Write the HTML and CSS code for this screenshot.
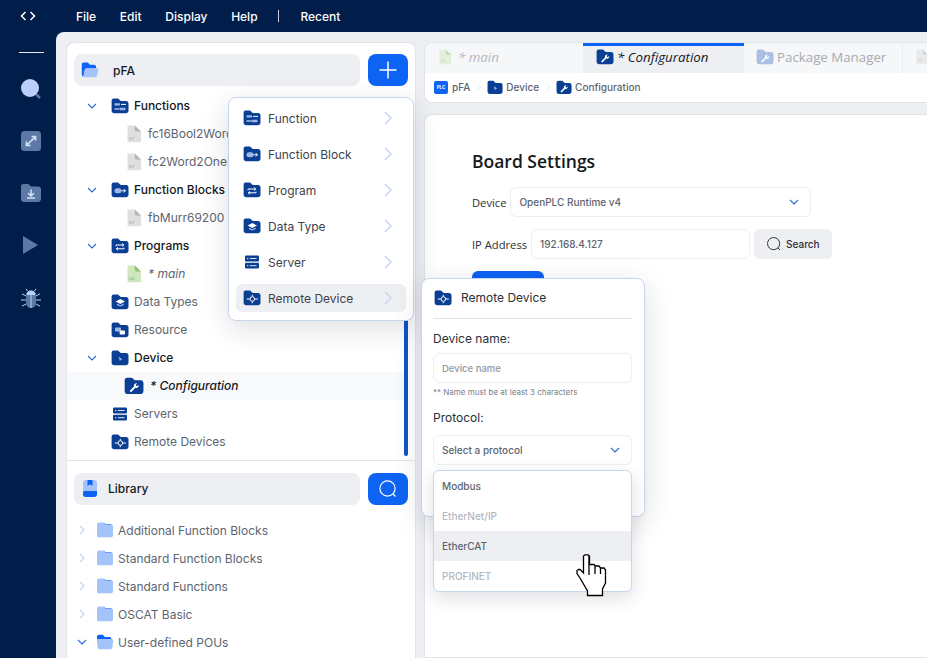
FILE: index.html
```html
<!DOCTYPE html>
<html lang="en">
<head>
<meta charset="utf-8">
<title>OpenPLC Editor</title>
<link rel="stylesheet" href="styles.css">
</head>
<body>
<svg class="defs" width="0" height="0" aria-hidden="true">
  <defs>
    <path id="fold" d="M.6 2.800C.6 1.400 1.500.5 2.900.5H7L9.800 2.900H15C16.600 2.900 17.500 3.900 17.500 5.500V12.500C17.500 14.200 16.400 15.300 14.800 15.300H3.300C1.700 15.300.6 14.200.6 12.500Z"/>
    <symbol id="i-fn" viewBox="0 0 18 16"><use href="#fold" fill="#0b3f94"/><g fill="#9db8e6"><rect x="3.500" y="5.200" width="5.500" height="2.400" rx=".6"/><rect x="8.500" y="9.800" width="6" height="2.400" rx=".6"/></g><path d="M10 6.400h5M3.500 11H8" stroke="#fff" stroke-width="1"/></symbol>
    <symbol id="i-fb" viewBox="0 0 18 16"><use href="#fold" fill="#0b3f94"/><rect x="3.500" y="6.300" width="7" height="5" rx="2.500" fill="#9db8e6"/><path d="M10.500 8.800h4M12.800 7.100l1.700 1.700-1.700 1.700" stroke="#fff" stroke-width="1" fill="none"/></symbol>
    <symbol id="i-prog" viewBox="0 0 18 16"><use href="#fold" fill="#0b3f94"/><path d="M5 8.200V7h7.500M11 5.600 12.800 7 11 8.400M13 9.600v1.200H5.500M7 9.400 5.200 10.800 7 12.200" stroke="#fff" stroke-width="1" fill="none"/></symbol>
    <symbol id="i-dt" viewBox="0 0 18 16"><use href="#fold" fill="#0b3f94"/><path d="M9.300 5 14 7.500 9.300 10 4.600 7.500Z" fill="#fff"/><path d="M6 9.600 9.300 11.400 12.600 9.600V11L9.300 12.500 6 11Z" fill="#b9cdf0"/></symbol>
    <symbol id="i-res" viewBox="0 0 18 16"><use href="#fold" fill="#0b3f94"/><rect x="4" y="5.600" width="6" height="4" rx=".8" fill="#9db8e6"/><rect x="8.600" y="8.600" width="5.400" height="4" rx=".8" fill="#fff"/></symbol>
    <symbol id="i-dev" viewBox="0 0 18 16"><use href="#fold" fill="#0b3f94"/><path d="M7.600 6.400 11.600 9.400 9.600 9.700 9 11.600Z" fill="#9db8e6"/></symbol>
    <symbol id="i-conf" viewBox="0 0 18 16"><use href="#fold" fill="#0b3f94"/><path d="M5 12.400 9 8.400C8.500 6.800 9.700 5.200 11.800 5.500L10.500 7.100 11.600 8.300 13.200 7C13.500 9 11.800 10.200 10.200 9.600L6.300 13.600Z" fill="#fff"/></symbol>
    <symbol id="i-conf-l" viewBox="0 0 18 16"><use href="#fold" fill="#a9bfe3"/><path d="M5 12.400 9 8.400C8.500 6.800 9.700 5.200 11.800 5.500L10.500 7.100 11.600 8.300 13.200 7C13.500 9 11.800 10.200 10.200 9.600L6.300 13.600Z" fill="#fff"/></symbol>
    <symbol id="i-srv" viewBox="0 0 18 16"><rect x="2" y="1.600" width="14" height="5.800" rx="1" fill="#0b3f94"/><rect x="2" y="8.800" width="14" height="5.800" rx="1" fill="#0b3f94"/><path d="M4 4.500h1.400M7 4.500h6.500M4 11.700h1.400M7 11.700h6.500" stroke="#dbe6f8" stroke-width="1"/></symbol>
    <symbol id="i-rem" viewBox="0 0 18 16"><use href="#fold" fill="#0b3f94"/><circle cx="9.300" cy="9" r="2.300" fill="none" stroke="#fff" stroke-width="1"/><path d="M9.300 4.800v1.600M9.300 11.600v1.600M3.800 9h3M11.800 9h3" stroke="#fff" stroke-width="1"/></symbol>
    <symbol id="i-file-g" viewBox="0 0 16 18"><path d="M1.500 1.500C1.500.9 1.900.5 2.500.5H8.800L15 6.500V16C15 16.800 14.500 17.300 13.800 17.300H2.700C2 17.300 1.500 16.800 1.500 16Z" fill="#dedfe1"/><path d="M8.800.5 15 6.500H10.500C9.500 6.500 8.800 5.800 8.800 4.800Z" fill="#b2b4b8"/><text x="3" y="14.500" class="file-tag file-tag-g">ST</text></symbol>
    <symbol id="i-file-l" viewBox="0 0 16 18"><path d="M1.500 1.500C1.500.9 1.900.5 2.500.5H8.800L15 6.500V16C15 16.800 14.500 17.300 13.800 17.300H2.700C2 17.300 1.500 16.800 1.500 16Z" fill="#cfe6bf"/><path d="M8.800.5 15 6.500H10.500C9.500 6.500 8.800 5.800 8.800 4.800Z" fill="#8fc46f"/><text x="3" y="14.500" class="file-tag file-tag-l">LD</text></symbol>
    <symbol id="i-folder-c" viewBox="0 0 18 16"><path d="M1 2.500C1 1.400 1.800.6 2.900.6H8L9.600 2.200H14.800C16.200 2.200 17 3 17 4.300V13.200C17 14.500 16.200 15.300 14.800 15.300H3.200C1.800 15.300 1 14.500 1 13.200Z" fill="#a5c3fb"/><path d="M8 .6 9.600 2.200H14.800C15.300 2.200 15.800 2.400 16.100 2.700H9.300Z" fill="#0d63f3"/></symbol>
    <symbol id="i-folder-o" viewBox="0 0 18 16"><path d="M1 2.700C1 1.500 1.800.7 3 .7H6.800L8.800 2.900H13.500C14.600 2.900 15.300 3.600 15.300 4.700V6H1Z" fill="#0d63f3"/><path d="M.8 6.100C.8 5.400 1.300 5 2 5H16C16.800 5 17.300 5.600 17.200 6.400L16.400 13.300C16.300 14.500 15.500 15.300 14.300 15.300H3.700C2.500 15.300 1.700 14.500 1.600 13.300Z" fill="#a5c3fb"/></symbol>
    <symbol id="i-project" viewBox="0 0 18 16"><path d="M.8 2.600C.8 1.300 1.600.5 2.900.5H6.800L9 2.700H13C14.300 2.700 15 3.500 15 4.700V6.500H6C4.800 6.500 4 7.200 3.700 8.300L2.400 14.800C1.400 14.500.8 13.700.8 12.600Z" fill="#0d63f3"/><path d="M5.800 6.300H16C17 6.300 17.500 7 17.300 7.900L16 13.400C15.700 14.600 14.900 15.300 13.700 15.300H3.200C2.500 15.300 2.200 14.900 2.300 14.300L3.700 8C4 6.900 4.700 6.300 5.800 6.300Z" fill="#a5c3fb"/></symbol>
    <symbol id="chev" viewBox="0 0 12 12"><path d="M2 4 6 8 10 4" fill="none" stroke="currentColor" stroke-width="1.100"/></symbol>
    <symbol id="chev-r" viewBox="0 0 12 12"><path d="M4 2 8 6 4 10" fill="none" stroke="currentColor" stroke-width="1.100"/></symbol>
    <symbol id="search" viewBox="0 0 20 20"><circle cx="9.500" cy="9.500" r="7.600" fill="none" stroke="currentColor" stroke-width="1.200"/><path d="M15 15 17.500 17.500" stroke="currentColor" stroke-width="1.200"/></symbol>
  </defs>
</svg>

<header class="topbar">
  <svg class="code-icon" viewBox="0 0 16 10" aria-hidden="true"><path d="M5.500 1 1.500 5 5.500 9M10.500 1 14.500 5 10.500 9" fill="none" stroke="#fff" stroke-width="1.500"/></svg>
  <nav class="menubar">
    <span>File</span><span>Edit</span><span>Display</span><span>Help</span><i class="menu-sep"></i><span>Recent</span>
  </nav>
</header>

<div class="shell">
  <aside class="rail">
    <hr class="rail-line">
    <svg class="rail-icon r-search" viewBox="0 0 22 22" aria-hidden="true"><circle cx="10" cy="10" r="9" fill="#b9d0fa"/><path d="M16.500 16.500 20 20" stroke="#5d7aa6" stroke-width="2.500"/></svg>
    <svg class="rail-icon r-expand" viewBox="0 0 20 20" aria-hidden="true"><rect width="20" height="20" rx="3.500" fill="#5c78a5"/><path d="M6.500 13.500 13.500 6.500M10.500 5.500H14.500V9.500M5.500 10.500V14.500H9.500" fill="none" stroke="#d5e2fa" stroke-width="1.700"/></svg>
    <svg class="rail-icon r-down" viewBox="0 0 20 18" aria-hidden="true"><path d="M0 2.500C0 1 1 0 2.500 0H7.500L10 2.500H17C18.800 2.500 20 3.500 20 5.200V14.800C20 16.700 18.800 18 17 18H3C1.200 18 0 16.700 0 14.800Z" fill="#5c78a5"/><path d="M10 5.500V11.500M7 9.300 10 12 13 9.300M6 14H14" fill="none" stroke="#d5e2fa" stroke-width="1.500"/></svg>
    <svg class="rail-icon r-play" viewBox="0 0 15 18" aria-hidden="true"><path d="M0 0 15 9 0 18Z" fill="#5c78a5"/></svg>
    <svg class="rail-icon r-bug" viewBox="0 0 20 20" aria-hidden="true"><path d="M5 7C5 4 7 2.500 10 2.500S15 4 15 7V15C15 18 12.500 20 10 20S5 18 5 15Z" fill="#5c78a5"/><path d="M5.500 5.500C6.500 3.500 8 2.500 10 2.500S13.500 3.500 14.500 5.500L14 7H6Z" fill="#b9d0fa"/><path d="M10 7V20M6.500 3 5 .8M13.500 3 15 .8M5 8 1 5.800M15 8 19 5.800M5 12H0M15 12H20M5 16 1 18.200M15 16 19 18.200" stroke="#b9d0fa" stroke-width="1"/></svg>
  </aside>

  <main class="workspace">
    <section class="sidepanel">
      <div class="tool-row">
        <div class="tool-title title-pfa">
          <svg class="ic-18" aria-hidden="true"><use href="#i-project"/></svg>
          <span>pFA</span>
        </div>
        <button class="tool-btn" type="button" aria-label="Add">
          <svg viewBox="0 0 20 20" aria-hidden="true"><path d="M10 1.500V18.500M1.500 10H18.500" stroke="#fff" stroke-width="1.500"/></svg>
        </button>
      </div>

      <ul class="tree">
        <li class="row lv0 strong"><svg class="tw" aria-hidden="true"><use href="#chev"/></svg><svg class="ic-18" aria-hidden="true"><use href="#i-fn"/></svg><span>Functions</span></li>
        <li class="row lv1"><svg class="ic-file" aria-hidden="true"><use href="#i-file-g"/></svg><span>fc16Bool2Word</span></li>
        <li class="row lv1"><svg class="ic-file" aria-hidden="true"><use href="#i-file-g"/></svg><span>fc2Word2OneBool</span></li>
        <li class="row lv0 strong"><svg class="tw" aria-hidden="true"><use href="#chev"/></svg><svg class="ic-18" aria-hidden="true"><use href="#i-fb"/></svg><span>Function Blocks</span></li>
        <li class="row lv1"><svg class="ic-file" aria-hidden="true"><use href="#i-file-g"/></svg><span>fbMurr69200</span></li>
        <li class="row lv0 strong"><svg class="tw" aria-hidden="true"><use href="#chev"/></svg><svg class="ic-18" aria-hidden="true"><use href="#i-prog"/></svg><span>Programs</span></li>
        <li class="row lv1 ital"><svg class="ic-file" aria-hidden="true"><use href="#i-file-l"/></svg><span>* main</span></li>
        <li class="row lv0x"><svg class="ic-18" aria-hidden="true"><use href="#i-dt"/></svg><span>Data Types</span></li>
        <li class="row lv0x"><svg class="ic-18" aria-hidden="true"><use href="#i-res"/></svg><span>Resource</span></li>
        <li class="row lv0 strong"><svg class="tw" aria-hidden="true"><use href="#chev"/></svg><svg class="ic-18" aria-hidden="true"><use href="#i-dev"/></svg><span>Device</span></li>
        <li class="row lv-conf"><svg class="ic-conf" aria-hidden="true"><use href="#i-conf"/></svg><span>* Configuration</span></li>
        <li class="row lv0x"><svg class="ic-18" aria-hidden="true"><use href="#i-srv"/></svg><span>Servers</span></li>
        <li class="row lv0x"><svg class="ic-18" aria-hidden="true"><use href="#i-rem"/></svg><span>Remote Devices</span></li>
      </ul>
      <i class="scrollbar"></i>

      <div class="library">
        <div class="tool-row lib-tools">
          <div class="tool-title title-lib">
            <svg class="ic-lib" viewBox="0 0 14 17" aria-hidden="true"><path d="M0 2.500C0 1.100 1.100 0 2.500 0H11.500C12.900 0 14 1.100 14 2.500V12H0Z" fill="#a5c3fb"/><path d="M0 13C0 11.500 1 11 2.500 11H14V14.500C14 15.900 12.900 17 11.500 17H2.500C1.100 17 0 15.900 0 14.500Z" fill="#0d63f3"/><path d="M4.500 0H9.500V6L7 4.300 4.500 6Z" fill="#0d63f3"/></svg>
            <span>Library</span>
          </div>
          <button class="tool-btn" type="button" aria-label="Search">
            <svg viewBox="0 0 20 20" aria-hidden="true"><use href="#search" color="#fff"/></svg>
          </button>
        </div>
        <ul class="lib-tree">
          <li class="lib-row"><svg class="tw tw-r" aria-hidden="true"><use href="#chev-r"/></svg><svg class="ic-lf" aria-hidden="true"><use href="#i-folder-c"/></svg><span>Additional Function Blocks</span></li>
          <li class="lib-row"><svg class="tw tw-r" aria-hidden="true"><use href="#chev-r"/></svg><svg class="ic-lf" aria-hidden="true"><use href="#i-folder-c"/></svg><span>Standard Function Blocks</span></li>
          <li class="lib-row"><svg class="tw tw-r" aria-hidden="true"><use href="#chev-r"/></svg><svg class="ic-lf" aria-hidden="true"><use href="#i-folder-c"/></svg><span>Standard Functions</span></li>
          <li class="lib-row"><svg class="tw tw-r" aria-hidden="true"><use href="#chev-r"/></svg><svg class="ic-lf" aria-hidden="true"><use href="#i-folder-c"/></svg><span>OSCAT Basic</span></li>
          <li class="lib-row"><svg class="tw" aria-hidden="true"><use href="#chev"/></svg><svg class="ic-lf" aria-hidden="true"><use href="#i-folder-o"/></svg><span>User-defined POUs</span></li>
        </ul>
      </div>
    </section>

    <section class="content">
      <div class="tabs-card">
        <div class="tabs">
          <div class="tab tab-dim"><svg class="ic-tabfile" aria-hidden="true"><use href="#i-file-l"/></svg><span>* main</span></div>
          <div class="tab tab-active"><svg class="ic-tab" aria-hidden="true"><use href="#i-conf"/></svg><span>* Configuration</span></div>
          <div class="tab tab-pkg"><svg class="ic-tab" aria-hidden="true"><use href="#i-conf-l"/></svg><span>Package Manager</span></div>
          <div class="tab tab-last"><svg class="ic-tabfile" aria-hidden="true"><use href="#i-file-g"/></svg></div>
        </div>
        <div class="crumbs">
          <span class="plc">PLC</span><span>pFA</span>
          <svg class="crumb-sep" aria-hidden="true"><use href="#chev-r"/></svg>
          <svg class="ic-crumb" aria-hidden="true"><use href="#i-dev"/></svg><span>Device</span>
          <svg class="crumb-sep" aria-hidden="true"><use href="#chev-r"/></svg>
          <svg class="ic-crumb" aria-hidden="true"><use href="#i-conf"/></svg><span>Configuration</span>
        </div>
      </div>

      <div class="board">
        <h1>Board Settings</h1>
        <div class="form-row">
          <label>Device</label>
          <div class="field field-device"><span>OpenPLC Runtime v4</span><svg class="fchev" aria-hidden="true"><use href="#chev"/></svg></div>
        </div>
        <div class="form-row">
          <label>IP Address</label>
          <div class="field field-ip"><span>192.168.4.127</span></div>
          <button class="search-btn" type="button"><svg aria-hidden="true"><use href="#search"/></svg>Search</button>
        </div>
        <button class="primary" type="button" aria-label="Connect"></button>
      </div>
    </section>
  </main>
</div>

<div class="popmenu">
  <div class="pm-item"><svg class="ic-18" aria-hidden="true"><use href="#i-fn"/></svg><span>Function</span><svg class="pm-chev" aria-hidden="true"><use href="#chev-r"/></svg></div>
  <div class="pm-item"><svg class="ic-18" aria-hidden="true"><use href="#i-fb"/></svg><span>Function Block</span><svg class="pm-chev" aria-hidden="true"><use href="#chev-r"/></svg></div>
  <div class="pm-item"><svg class="ic-18" aria-hidden="true"><use href="#i-prog"/></svg><span>Program</span><svg class="pm-chev" aria-hidden="true"><use href="#chev-r"/></svg></div>
  <div class="pm-item"><svg class="ic-18" aria-hidden="true"><use href="#i-dt"/></svg><span>Data Type</span><svg class="pm-chev" aria-hidden="true"><use href="#chev-r"/></svg></div>
  <div class="pm-item"><svg class="ic-18" aria-hidden="true"><use href="#i-srv"/></svg><span>Server</span><svg class="pm-chev" aria-hidden="true"><use href="#chev-r"/></svg></div>
  <div class="pm-item pm-active"><svg class="ic-18" aria-hidden="true"><use href="#i-rem"/></svg><span>Remote Device</span><svg class="pm-chev" aria-hidden="true"><use href="#chev-r"/></svg></div>
</div>

<div class="modal">
  <div class="modal-head"><svg class="ic-18" aria-hidden="true"><use href="#i-rem"/></svg><span>Remote Device</span></div>
  <label class="m-label">Device name:</label>
  <div class="m-field m-placeholder">Device name</div>
  <p class="m-hint">** Name must be at least 3 characters</p>
  <label class="m-label m-label-proto">Protocol:</label>
  <div class="m-field m-select"><span>Select a protocol</span><svg class="fchev" aria-hidden="true"><use href="#chev"/></svg></div>
</div>

<ul class="protocols">
  <li>Modbus</li>
  <li class="off">EtherNet/IP</li>
  <li class="hot">EtherCAT</li>
  <li class="off">PROFINET</li>
</ul>

<svg class="hand" viewBox="0 0 31 43" aria-hidden="true">
  <path d="M7.500 19V2L9 .8H12L13.500 2V10.500H18L19.500 12H23L24.500 14H28L29.500 16V29L26.500 35V41.500H11.500V37L4 24 1 19.500V16.500L2.500 15.500H4Z" fill="#fff" stroke="#000" stroke-width="1.300"/>
  <path d="M13 2V21M19 12V20M24.500 14V20" fill="none" stroke="#000" stroke-width="1.300"/>
</svg>
</body>
</html>
```
FILE: styles.css
```css
* { box-sizing: border-box; }
html, body { margin: 0; height: 100%; }
body {
  position: relative;
  width: 927px;
  height: 658px;
  overflow: hidden;
  display: flex;
  flex-direction: column;
  background: #011e4b;
  font-family: Inter, "Liberation Sans", sans-serif;
  font-size: 12px;
  color: #5d6470;
}
.defs { position: absolute; }
ul { list-style: none; margin: 0; padding: 0; }
svg { display: block; flex: none; }
.file-tag { font: 700 4px "Liberation Sans", sans-serif; }
.file-tag-g { fill: #b2b4b8; }
.file-tag-l { fill: #8fc46f; }

/* top bar */
.topbar { height: 32px; display: flex; align-items: center; flex: none; }
.code-icon { width: 16px; height: 10px; margin-left: 20px; }
.menubar { display: flex; align-items: center; gap: 23.700px; margin-left: 40px; color: #fff; font-weight: 500; font-size: 12px; }
.menu-sep { width: 1px; height: 12px; background: #c9d3e3; margin: 0 -2.500px 0 -3px; }

/* shell */
.shell { flex: 1; display: flex; min-height: 0; }
.rail { width: 56px; flex: none; display: flex; flex-direction: column; align-items: center; }
.rail-line { width: 25px; height: 1px; margin: 20px 0 0 7px; border: 0; background: #e5e9f0; }
.rail-icon { margin-left: 5px; }
.r-search { width: 22px; height: 22px; margin-top: 25px; }
.r-expand { width: 20px; height: 20px; margin-top: 31px; }
.r-down { width: 20px; height: 18px; margin-top: 33px; }
.r-play { width: 15px; height: 18px; margin-top: 34px; }
.r-bug { width: 20px; height: 20px; margin-top: 34px; }

.workspace {
  flex: 1;
  min-width: 0;
  display: flex;
  gap: 8px;
  padding: 10px 0 0 10px;
  background: #edeff3;
  border-top-left-radius: 8px;
}

/* side panel */
.sidepanel {
  position: relative;
  width: 350px;
  flex: none;
  background: #fff;
  border: 1px solid #e1e4e9;
  border-bottom: 0;
  border-radius: 8px 8px 0 0;
}
.tool-row { display: flex; gap: 8px; padding: 11px 7px 0; }
.tool-title {
  flex: 1;
  height: 32px;
  display: flex;
  align-items: center;
  background: #edeff3;
  border-radius: 8px;
  color: #15181d;
  font-weight: 500;
  font-size: 12px;
}
.title-pfa { padding-left: 7px; gap: 14px; }
.title-lib { padding-left: 9px; gap: 11px; }
.tool-btn {
  width: 40px;
  height: 32px;
  flex: none;
  display: flex;
  align-items: center;
  justify-content: center;
  padding: 0;
  border: 0;
  border-radius: 8px;
  background: #0d63f3;
}
.tool-btn svg { width: 20px; height: 20px; }
.ic-18 { width: 18px; height: 16px; }
.ic-lib { width: 14px; height: 17px; }

.tree { margin-top: 5.500px; height: 364px; }
.row { height: 28px; display: flex; align-items: center; font-size: 12px; white-space: nowrap; color: #5d6470; }
.row.strong { color: #15181d; font-weight: 500; }
.tw { width: 12px; height: 12px; color: #2a68d8; }
.tw-r { color: #c2d4f4; }
.lv0 { padding-left: 19px; }
.lv0 .tw { margin-right: 13px; }
.lv0 .ic-18 { margin-right: 5px; }
.lv0x { padding-left: 44px; }
.lv0x .ic-18 { margin-right: 5px; }
.lv1 { padding-left: 59px; }
.ic-file { width: 16px; height: 18px; margin-right: 6px; }
.ital span { font-style: italic; }
.lv-conf { padding-left: 57px; background: #f8f9fa; width: 337px; color: #15181d; font-style: italic; font-weight: 500; }
.ic-conf { width: 20px; height: 18px; margin-right: 6px; }
.scrollbar { position: absolute; right: 7px; top: 200px; width: 4px; height: 213px; border-radius: 2px; background: #0f55c8; }

.library { border-top: 1px solid #e1e4e9; margin-top: 4px; }
.lib-tools { padding-top: 12px; }
.lib-tree { margin-top: 11.500px; }
.lib-row { height: 28px; display: flex; align-items: center; padding-left: 9px; color: #5d6470; white-space: nowrap; }
.lib-row .tw { margin-right: 8px; }
.ic-lf { width: 18px; height: 16px; margin-right: 4px; }

/* content */
.content { flex: 1; min-width: 0; display: flex; flex-direction: column; gap: 11px; }
.tabs-card {
  height: 61px;
  flex: none;
  background: #fff;
  border: 1px solid #e1e4e9;
  border-right: 0;
  border-radius: 8px 0 0 8px;
  overflow: hidden;
}
.tabs { height: 30px; display: flex; background: #f6f7f8; }
.tab { flex: none; width: 159px; display: flex; align-items: center; gap: 3px; padding: 0 0 2px 12px; border-right: 1px solid #e9ebee; font-size: 13.300px; white-space: nowrap; font-family: "Open Sans", sans-serif; }
.tab-dim { width: 158px; padding-left: 13px; gap: 6px; font-style: italic; color: #b5b8bd; border-right: 0; }
.tab-dim svg { opacity: .5; }
.tab-active { width: 161px; padding: 0 0 5px 13px; background: #edeff3; border-top: 3px solid #0d63f3; border-right: 0; color: #15181d; font-style: italic; }
.tab-pkg { color: #a7abb2; }
.tab-last { opacity: .5; border-right: 0; width: 40px; }
.ic-tab { width: 18px; height: 16px; }
.ic-tabfile { width: 14px; height: 16px; }

.crumbs { height: 30px; display: flex; align-items: center; padding: 0 0 2px 9px; font-size: 10px; font-weight: 500; color: #5d6470; }
.plc { width: 14px; height: 13px; margin-right: 4px; border-radius: 2px; background: #0d63f3; color: #fff; font-size: 4.500px; font-weight: 700; line-height: 13px; text-align: center; }
.crumb-sep { width: 10px; height: 10px; color: #dce6f7; margin: 0 3px 0 4px; }
.ic-crumb { width: 16px; height: 15px; margin-right: 3px; }

.board {
  flex: 1;
  background: #fff;
  border: 1px solid #e1e4e9;
  border-right: 0;
  border-radius: 8px 0 0 0;
  padding: 35px 0 0 47px;
  color: #15181d;
}
.board h1 { margin: 0 0 15px; font: 600 17.500px/22px "Open Sans", sans-serif; color: #15181d; }
.form-row { display: flex; align-items: center; height: 30px; margin-bottom: 12px; font: 11.200px "Open Sans", sans-serif; }
.form-row label { margin-right: 4px; color: #2a2e35; }
.field { height: 30px; display: flex; align-items: center; padding-left: 8px; border: 1px solid #eceef1; border-radius: 6px; color: #5d6470; font: 500 10px Inter, sans-serif; }
.field-device { width: 301px; padding-right: 10px; justify-content: space-between; }
.field-ip { width: 219px; }
.fchev { width: 12px; height: 12px; color: #2a68d8; }
.search-btn { width: 78px; height: 30px; margin-left: 4px; display: flex; align-items: center; gap: 4px; padding: 0 0 0 12px; border: 0; border-radius: 6px; background: #edeff3; color: #2a2e35; font: 500 10px Inter, sans-serif; }
.search-btn svg { width: 16px; height: 16px; color: #2a2e35; }
.primary { display: block; width: 72px; height: 30px; border: 0; border-radius: 6px; background: #0d63f3; }

/* popover menu */
.popmenu {
  position: absolute;
  left: 228px;
  top: 97px;
  width: 186px;
  height: 224px;
  padding: 2px 7px 0;
  background: #fff;
  border: 1px solid #c6d6ef;
  border-radius: 8px;
  box-shadow: 0 8px 28px rgba(20, 30, 50, .14);
}
.pm-item { height: 36px; display: flex; align-items: center; gap: 7px; padding: 0 10px 0 7px; color: #3d434d; font-size: 12px; border-radius: 6px; }
.pm-item span { flex: 1; }
.pm-chev { width: 18px; height: 18px; color: #c9d9f3; margin-right: -1px; }
.pm-active { height: 28px; margin-top: 4px; background: #edeff3; }

/* modal */
.modal {
  position: absolute;
  left: 421px;
  top: 278px;
  width: 224px;
  height: 239px;
  padding: 0 12px 0 11px;
  background: #fff;
  border: 1px solid #c6d6ef;
  border-radius: 8px;
  box-shadow: 0 8px 28px rgba(20, 30, 50, .14);
}
.modal-head { height: 40px; display: flex; align-items: center; gap: 9px; padding: 0 0 2px 1px; border-bottom: 1px solid #dfe3ea; color: #2a2e35; font-size: 12px; }
.m-label { display: block; color: #2a2e35; font-size: 12px; line-height: 16px; margin-top: 12px; }
.m-label-proto { margin-top: 13px; }
.m-field { height: 30px; margin-top: 6px; display: flex; align-items: center; padding: 0 10px 0 8px; border: 1px solid #eceef1; border-radius: 6px; font-size: 9.500px; font-weight: 500; }
.m-placeholder { color: #9297a0; }
.m-label-proto + .m-field { margin-top: 9px; }
.m-select { justify-content: space-between; color: #5d6470; font-size: 10px; }
.m-hint { margin: 4px 0 0; font-size: 8px; line-height: 10px; color: #7a808a; }

/* protocol list */
.protocols {
  position: absolute;
  left: 433px;
  top: 470px;
  width: 199px;
  height: 122px;
  background: #fff;
  border: 1px solid #c6d6ef;
  border-radius: 6px;
  box-shadow: 0 6px 18px rgba(20, 30, 50, .14);
  overflow: hidden;
}
.protocols li { height: 30px; display: flex; align-items: center; padding-left: 8px; font-size: 10px; font-weight: 500; color: #5d6470; }
.protocols .off { color: #b4b7bd; }
.protocols .hot { background: #edeff3; }

.hand { position: absolute; left: 576px; top: 554px; width: 31px; height: 43px; }
```
